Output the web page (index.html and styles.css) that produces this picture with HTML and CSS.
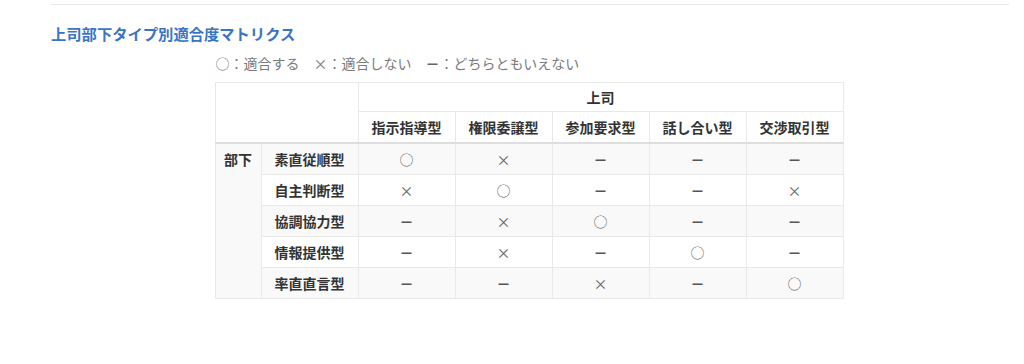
FILE: index.html
```html
<!DOCTYPE html>
<html lang="ja">
<head>
  <meta charset="UTF-8" />
  <title>上司部下タイプ別適合度マトリクス</title>
  <meta name="viewport" content="width=device-width, initial-scale=1.0" />
  <link rel="stylesheet" href="styles.css">
</head>
<body>

  <div class="content">
    <hr class="rule">

    <h2 class="title">上司部下タイプ別適合度マトリクス</h2>

    <div class="matrix">
      <p class="legend">○：適合する　×：適合しない　<span class="na">－</span>：どちらともいえない</p>

      <table>
        <thead>
          <tr>
            <th class="blank" colspan="2" rowspan="2"></th>
            <th colspan="5">上司</th>
          </tr>
          <tr class="types">
            <th>指示指導型</th>
            <th>権限委譲型</th>
            <th>参加要求型</th>
            <th>話し合い型</th>
            <th>交渉取引型</th>
          </tr>
        </thead>
        <tbody>
          <tr>
            <th class="group" rowspan="5">部下</th>
            <th>素直従順型</th>
            <td>○</td><td>×</td><td class="na">－</td><td class="na">－</td><td class="na">－</td>
          </tr>
          <tr>
            <th>自主判断型</th>
            <td>×</td><td>○</td><td class="na">－</td><td class="na">－</td><td>×</td>
          </tr>
          <tr>
            <th>協調協力型</th>
            <td class="na">－</td><td>×</td><td>○</td><td class="na">－</td><td class="na">－</td>
          </tr>
          <tr>
            <th>情報提供型</th>
            <td class="na">－</td><td>×</td><td class="na">－</td><td>○</td><td class="na">－</td>
          </tr>
          <tr>
            <th>率直直言型</th>
            <td class="na">－</td><td class="na">－</td><td>×</td><td class="na">－</td><td>○</td>
          </tr>
        </tbody>
      </table>
    </div>
  </div>

</body>
</html>
```

FILE: styles.css
```css
* {
  margin: 0;
  padding: 0;
  box-sizing: border-box;
}

body {
  background: #fff;
  font-family: 'Noto Sans CJK JP', 'Noto Sans', sans-serif;
  color: #333;
}

.content {
  margin: 0 15px 0 51px;
  padding-top: 4px;
}

.rule {
  border: none;
  border-top: 1px solid #e6e6e6;
}

.title {
  font-size: 15.3px;
  font-weight: 700;
  color: #3a74c4;
  line-height: 22px;
  margin-top: 17px;
}

.matrix {
  width: fit-content;
  margin: 0 auto;
  padding-right: 2px;
}

.legend {
  font-size: 14px;
  color: #7a7a7a;
  line-height: 20px;
  margin: 9px 0 9px 1px;
}

.na {
  font-weight: 700;
}

.legend .na {
  color: #666;
}

table {
  border-collapse: collapse;
  border: 1px solid #e6e6e6;
  font-size: 14px;
}

th,
td {
  border: 1px solid #e9e9e9;
  text-align: center;
  line-height: 20px;
  padding: 4px 8px;
  width: 97px;
}

th {
  font-weight: 700;
  color: #333;
}

thead .types th {
  padding: 5px 8px;
  border-bottom: 2px solid #dedede;
}

th.blank {
  border-bottom: 2px solid #dedede;
}

tbody td,
tbody th {
  height: 31px;
}

tbody td {
  color: #666;
}

tbody td.na {
  color: #555;
}

tbody tr:nth-child(odd) {
  background: #f9f9f9;
}

th.group {
  width: 46px;
  vertical-align: top;
  background: #f9f9f9;
  padding-top: 5px;
}
```
